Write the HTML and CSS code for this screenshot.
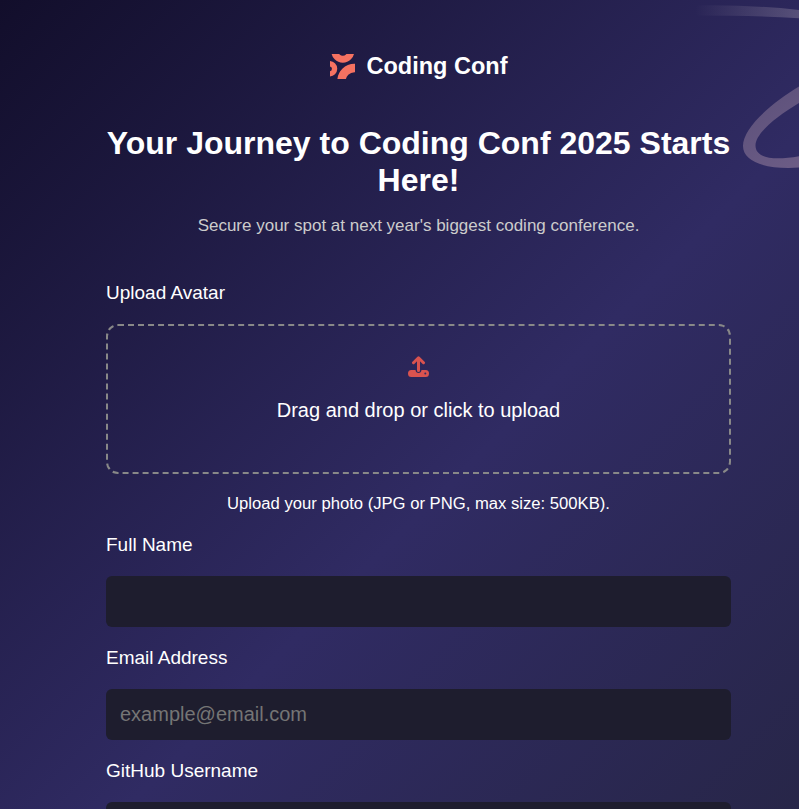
FILE: index.html
```html
<!DOCTYPE html>
<html lang="en">
<head>
<meta charset="utf-8">
<title>Coding Conf</title>
<link rel="stylesheet" href="styles.css">
</head>
<body>
<svg class="swirl" width="120" height="180" viewBox="0 0 120 180" fill="none">
  <defs>
    <linearGradient id="fade" x1="16" y1="0" x2="120" y2="0" gradientUnits="userSpaceOnUse"><stop stop-color="#ccbfc8" stop-opacity="0"/><stop offset="1" stop-color="#ccbfc8" stop-opacity=".27"/></linearGradient>
    <linearGradient id="loop" x1="70" y1="100" x2="120" y2="170" gradientUnits="userSpaceOnUse"><stop stop-color="#5d517b"/><stop offset="1" stop-color="#6d5d86"/></linearGradient>
  </defs>
  <path d="M16 5.500Q70 4.500 121 10V18.200Q75 15.500 16 15.500Z" fill="url(#fade)"/>
  <path d="M121 86C94 102 64 127 64 146C64 162 88 170 121 167.500V156C94 161 76 158 76.500 145C77 133 98 116 121 102.500Z" fill="url(#loop)"/>
</svg>
<main class="page">
  <header class="brand">
    <svg width="25" height="25" viewBox="0 0 25 25" fill="none" stroke="#f57261">
      <circle cx="12.800" cy="-2.800" r="8" stroke-width="7"/>
      <circle cx="-.5" cy="14.800" r="5.100" stroke-width="5.300"/>
      <circle cx="24.500" cy="27" r="13" stroke-width="8.400"/>
    </svg>
    <span>Coding Conf</span>
  </header>
  <h1>Your Journey to Coding Conf 2025 Starts Here!</h1>
  <p class="intro">Secure your spot at next year's biggest coding conference.</p>
  <form>
    <label class="label">Upload Avatar</label>
    <div class="drop">
      <svg width="21" height="21" viewBox="0 0 21 21" fill="none" stroke-linecap="round" stroke-linejoin="round">
        <path fill="#d9534f" d="M3.300 14H7.500Q7.800 17 10.500 17Q13.200 17 13.500 14H17.700Q21 14 21 17.500Q21 21 17.700 21H3.300Q0 21 0 17.500Q0 14 3.300 14Z"/>
        <circle cx="17.300" cy="17.400" r="1" fill="#302b63"/>
        <path d="M10.500 14.500V2.300M5.500 6.700L10.500 1.800L15.500 6.700" stroke="#d9534f" stroke-width="3"/>
      </svg>
      <span>Drag and drop or click to upload</span>
    </div>
    <p class="hint">Upload your photo (JPG or PNG, max size: 500KB).</p>
    <label class="label" for="name">Full Name</label>
    <input id="name" type="text">
    <label class="label" for="email">Email Address</label>
    <input id="email" type="email" placeholder="example@email.com">
    <label class="label" for="github">GitHub Username</label>
    <input id="github" type="text">
  </form>
</main>
</body>
</html>
```
FILE: styles.css
```css
* { box-sizing: border-box; }
html, body { height: 100%; margin: 0; }
body {
  position: relative;
  overflow: hidden;
  color: #fff;
  font-family: "Liberation Sans", Arial, sans-serif;
  background: linear-gradient(135deg, #120e2b 0%, #302b63 50%, #24243e 100%) 0 0 / 837px 1030px no-repeat;
}
.swirl { position: absolute; top: 0; right: 0; }
.page { position: relative; width: 625px; height: 100%; overflow: hidden; margin-left: 106px; padding-top: 53px; }
.brand { display: flex; align-items: center; justify-content: center; gap: 12px; height: 27px; font-size: 23.5px; font-weight: 700; }
h1 { margin: 45px 0 0; font-size: 32px; line-height: 37px; text-align: center; }
.intro { margin: 17px 0 0; font-size: 17px; line-height: 20px; text-align: center; color: #ccc; }
form { margin-top: 46px; }
.label { display: block; font-size: 19px; line-height: 22px; }
.drop { display: flex; flex-direction: column; align-items: center; height: 150px; margin: 20px 0 20px; padding-top: 30px; border: 2px dashed #888; border-radius: 12px; font-size: 20px; }
.drop span { margin-top: 22px; line-height: 23px; }
.hint { margin: 0 0 20px; font-size: 16.65px; line-height: 20px; text-align: center; }
input { display: block; width: 100%; height: 51px; margin: 20px 0; padding: 0 14px; border: 0; border-radius: 6px; background: #1e1d2e; color: #fff; font: 20px "Liberation Sans", Arial, sans-serif; }
input::placeholder { color: #757575; }
```
